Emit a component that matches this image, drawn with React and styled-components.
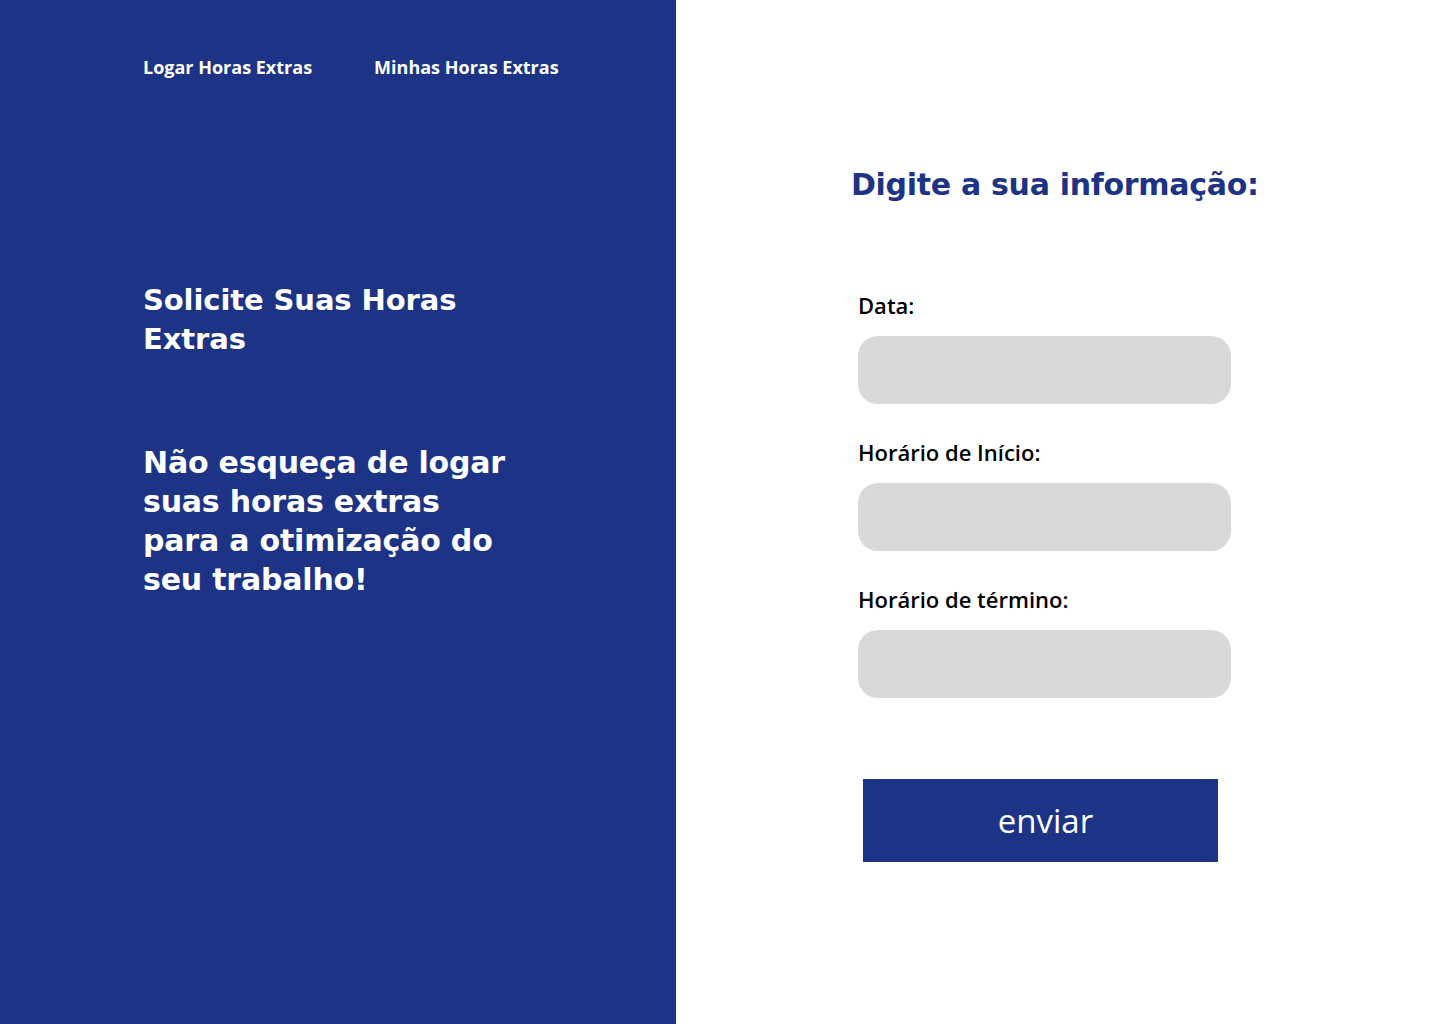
import React from 'react'
import styled, { createGlobalStyle } from 'styled-components'

const GlobalStyle = createGlobalStyle`
  body {
    margin: 0;
    font-family: "Open Sans", "Liberation Sans", sans-serif;
    background: #ffffff;
  }
`

const Page = styled.div`
  display: grid;
  grid-template-columns: 676px 1fr;
  width: 1440px;
  height: 1024px;
`

const SidePanel = styled.aside`
  background-color: #1d3385;
  color: #ffffff;
  padding: 55px 0 0 143px;
  box-sizing: border-box;
`

const Nav = styled.nav`
  display: flex;
  gap: 62px;
`

const NavLink = styled.a`
  font-family: "Open Sans", sans-serif;
  font-weight: 700;
  font-size: 18px;
  line-height: 24px;
  color: #ffffff;
  text-decoration: none;
  cursor: pointer;
`

const Headline = styled.h1`
  margin: ${(p) => p.$top}px 0 0;
  font-family: "DejaVu Sans", sans-serif;
  font-weight: 700;
  font-size: ${(p) => p.$size}px;
  line-height: 39px;
  letter-spacing: ${(p) => p.$spacing}px;
`

const FormPanel = styled.main`
  padding: 165px 0 0 175px;
  box-sizing: border-box;
`

const FormTitle = styled.h2`
  margin: 0;
  font-family: "DejaVu Sans", sans-serif;
  font-weight: 700;
  font-size: 30px;
  line-height: 40px;
  letter-spacing: -0.3px;
  color: #1d3385;
`

const Form = styled.form`
  display: flex;
  flex-direction: column;
  margin: 87px 0 0 7px;
`

const Label = styled.label`
  font-family: "Open Sans", sans-serif;
  font-weight: 600;
  font-size: 22px;
  line-height: 26px;
  color: #000000;
  margin-top: ${(p) => (p.$first ? 0 : 35)}px;
`

const Input = styled.input`
  width: 373px;
  height: 68px;
  margin-top: 18px;
  border: none;
  border-radius: 20px;
  background: #d9d9d9;
  box-sizing: border-box;
  padding: 0 20px;
  font-family: "Open Sans", sans-serif;
  font-size: 18px;
  outline: none;
`

const SubmitButton = styled.button`
  width: 355px;
  height: 83px;
  margin: 81px 0 0 5px;
  padding: 0 0 0 10px;
  border: none;
  background-color: #1d3385;
  color: #ffffff;
  font-family: "Open Sans", sans-serif;
  font-size: 33px;
  font-weight: 400;
  cursor: pointer;
`

const App = () => {
  return (
    <>
      <GlobalStyle />
      <Page>
        <SidePanel>
          <Nav>
            <NavLink>Logar Horas Extras</NavLink>
            <NavLink>Minhas Horas Extras</NavLink>
          </Nav>
          <Headline $top={202} $size={29} $spacing={-0.1}>
            Solicite Suas Horas<br />Extras
          </Headline>
          <Headline $top={84} $size={30} $spacing={-0.2}>
            Não esqueça de logar<br />
            suas horas extras<br />
            para a otimização do<br />
            seu trabalho!
          </Headline>
        </SidePanel>
        <FormPanel>
          <FormTitle>Digite a sua informação:</FormTitle>
          <Form onSubmit={(e) => e.preventDefault()}>
            <Label $first htmlFor="data">Data:</Label>
            <Input id="data" />
            <Label htmlFor="inicio">Horário de Início:</Label>
            <Input id="inicio" />
            <Label htmlFor="termino">Horário de término:</Label>
            <Input id="termino" />
            <SubmitButton type="submit">enviar</SubmitButton>
          </Form>
        </FormPanel>
      </Page>
    </>
  )
}

export default App
